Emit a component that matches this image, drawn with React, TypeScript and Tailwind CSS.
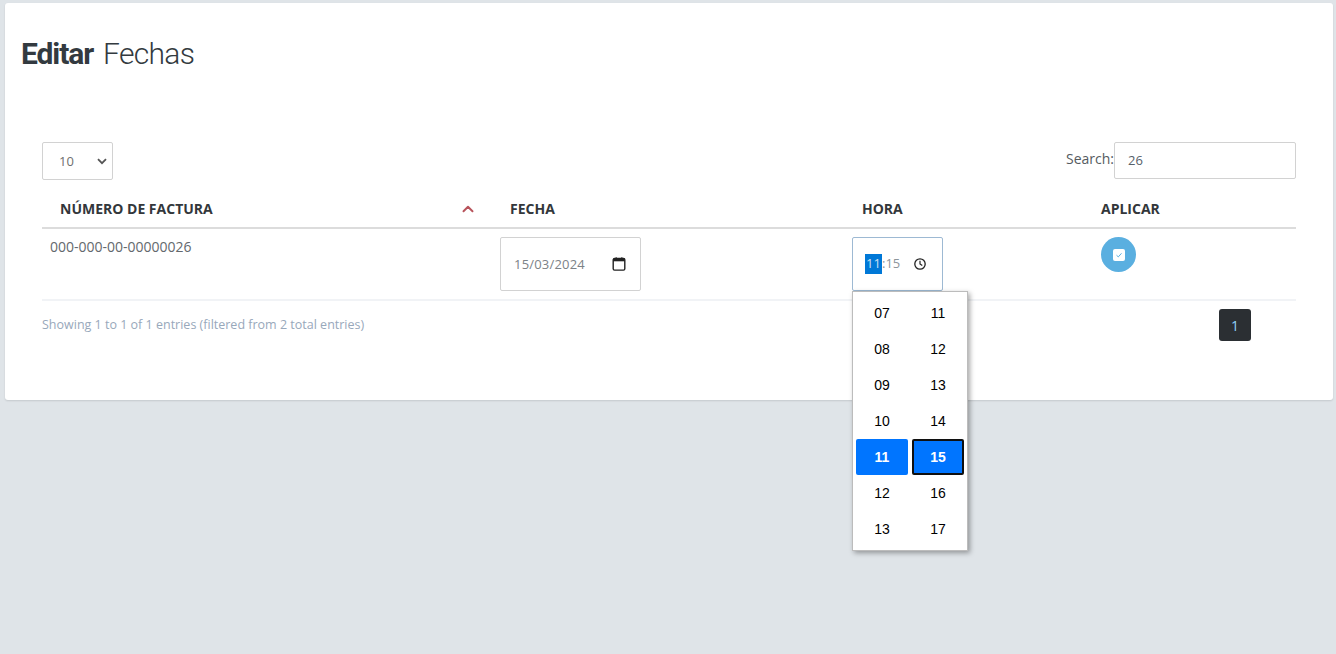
import { ChevronUp } from "lucide-react";

const hours = ["07", "08", "09", "10", "11", "12", "13"];
const minutes = ["11", "12", "13", "14", "15", "16", "17"];

const sans = "font-['Open_Sans',sans-serif]";

const CalendarIcon = () => (
  <svg width="14" height="14" viewBox="0 0 14 14" className="block">
    <path
      d="M2.5 1.5h9a1.3 1.3 0 0 1 1.3 1.3v9a1.3 1.3 0 0 1-1.3 1.3h-9a1.3 1.3 0 0 1-1.3-1.3v-9a1.3 1.3 0 0 1 1.3-1.3z"
      fill="none"
      stroke="#222"
      strokeWidth="1.4"
    />
    <rect x="1.2" y="1.5" width="11.6" height="2.8" fill="#222" />
    <rect x="3.5" y="0.4" width="1.4" height="2" fill="#222" />
    <rect x="9.1" y="0.4" width="1.4" height="2" fill="#222" />
  </svg>
);

const ClockIcon = () => (
  <svg width="14" height="14" viewBox="0 0 14 14" className="block">
    <circle cx="7" cy="7" r="5.2" fill="none" stroke="#222" strokeWidth="1.3" />
    <path d="M7 3.8V7l2.3 1.6" fill="none" stroke="#222" strokeWidth="1.2" />
  </svg>
);

const TimeColumn = ({ items, selected, focused }: { items: string[]; selected: string; focused?: boolean }) => (
  <div className="flex w-[52px] flex-col">
    {items.map((item) => {
      const on = item === selected;
      return (
        <div
          key={item}
          className={`flex h-9 items-center justify-center rounded-[2px] text-[14px] ${
            on ? "bg-[#0075ff] font-bold text-white" : "text-black"
          } ${on && focused ? "border-2 border-[#101010]" : ""}`}
        >
          {item}
        </div>
      );
    })}
  </div>
);

export default function App() {
  return (
    <div className={`h-[654px] overflow-hidden bg-[#dfe4e8] pt-[3px] pr-[3px] pl-[5px] ${sans}`}>
      <div className="h-[397px] rounded-[3px] bg-white shadow-[0_1px_2px_rgba(0,0,0,0.12)]">
        <div className="h-[139px] pt-[31px] pl-4">
          <h1 className="font-['Roboto',sans-serif] text-[30px] leading-10 text-[#333a40]">
            <span className="font-bold tracking-[-1.1px]">Editar</span>
            <span className="ml-[10px] font-light tracking-[-0.7px]">Fechas</span>
          </h1>
        </div>

        <div className="mr-[37px] ml-[37px]">
          <div className="flex h-[38px] items-start justify-between">
            <div className="flex h-[38px] w-[71px] items-center justify-between rounded-[2px] border border-[#d2d2d2] pr-[5px] pl-4 text-[13px] text-[#6f6f6f]">
              <span className="pt-[2px]">10</span>
              <svg width="10" height="7" viewBox="0 0 10 7">
                <path d="M1 1.2l4 4 4-4" fill="none" stroke="#555" strokeWidth="1.8" />
              </svg>
            </div>
            <div className="flex items-start">
              <span className="mt-[7px] text-[14px] leading-5 text-[#555b60]">Search:</span>
              <div className="flex h-[37px] w-[182px] items-center rounded-[2px] border border-[#d2d2d2] pl-[13px] text-[13px] text-[#56606a]">
                26
              </div>
            </div>
          </div>

          <table className="w-[1254px] table-fixed border-collapse">
            <colgroup>
              <col className="w-[458px]" />
              <col className="w-[352px]" />
              <col className="w-[249px]" />
              <col className="w-[195px]" />
            </colgroup>
            <thead>
              <tr className="h-[48px] border-b-2 border-[#dcdcdc] text-left text-[14px] font-bold text-[#33373b]">
                <th className="pt-[10px] pl-[18px]">
                  <div className="flex items-center justify-between pr-[23px]">
                    <span>NÚMERO DE FACTURA</span>
                    <ChevronUp size={18} strokeWidth={2.6} className="text-[#b8545c]" />
                  </div>
                </th>
                <th className="pt-[10px] pl-[10px]">FECHA</th>
                <th className="pt-[10px] pl-[10px]">HORA</th>
                <th className="pt-[10px]">APLICAR</th>
              </tr>
            </thead>
            <tbody>
              <tr className="h-[72px] border-b-2 border-[#f1f3f6] align-top">
                <td className="pt-[8px] pl-2 text-[14px] leading-5 text-[#63686d]">000-000-00-00000026</td>
                <td className="pt-2">
                  <div className="flex h-[54px] w-[141px] items-center justify-between rounded-[2px] border border-[#d2d2d2] pr-[14px] pl-[13px] text-[13px] tracking-[0.2px] text-[#7c8287]">
                    <span className="pt-[2px]">15/03/2024</span>
                    <CalendarIcon />
                  </div>
                </td>
                <td className="relative pt-2">
                  <div className="flex h-[54px] w-[91px] items-center justify-between rounded-[2px] border border-[#9db9d3] pr-[15px] pl-3 text-[13px] text-[#8d959c]">
                    <span className="flex h-5 items-center">
                      <span className="flex h-5 w-[17px] items-center justify-center bg-[#0078d7] text-[#cfe0f2]">11</span>
                      <span>:15</span>
                    </span>
                    <ClockIcon />
                  </div>
                  <div className="absolute top-[62px] left-0 z-10 flex h-[260px] w-[116px] gap-1 border border-[#bcbcbc] bg-white px-[3px] pt-[3px] shadow-[2px_2px_5px_rgba(0,0,0,0.35)] font-['Liberation_Sans',sans-serif]">
                    <TimeColumn items={hours} selected="11" />
                    <TimeColumn items={minutes} selected="15" focused />
                  </div>
                </td>
                <td className="pt-2">
                  <button className="flex h-[35px] w-[35px] items-center justify-center rounded-full bg-[#5aafe0]">
                    <span className="flex h-3 w-3 items-center justify-center rounded-[2px] bg-white">
                      <svg width="8" height="8" viewBox="0 0 8 8">
                        <path d="M1.5 4.2l1.8 1.7 3.2-3.6" fill="none" stroke="#5aafe0" strokeWidth="1" />
                      </svg>
                    </span>
                  </button>
                </td>
              </tr>
            </tbody>
          </table>

          <div className="flex items-start justify-between pt-[8px] pr-[45px]">
            <span className="pt-[6px] text-[12.5px] leading-5 text-[#98a8bb]">
              Showing 1 to 1 of 1 entries (filtered from 2 total entries)
            </span>
            <div className="flex h-8 w-8 items-center justify-center rounded-[3px] bg-[#2b2f33] text-[14px] text-[#8fd3f7]">
              1
            </div>
          </div>
        </div>
      </div>
    </div>
  );
}
